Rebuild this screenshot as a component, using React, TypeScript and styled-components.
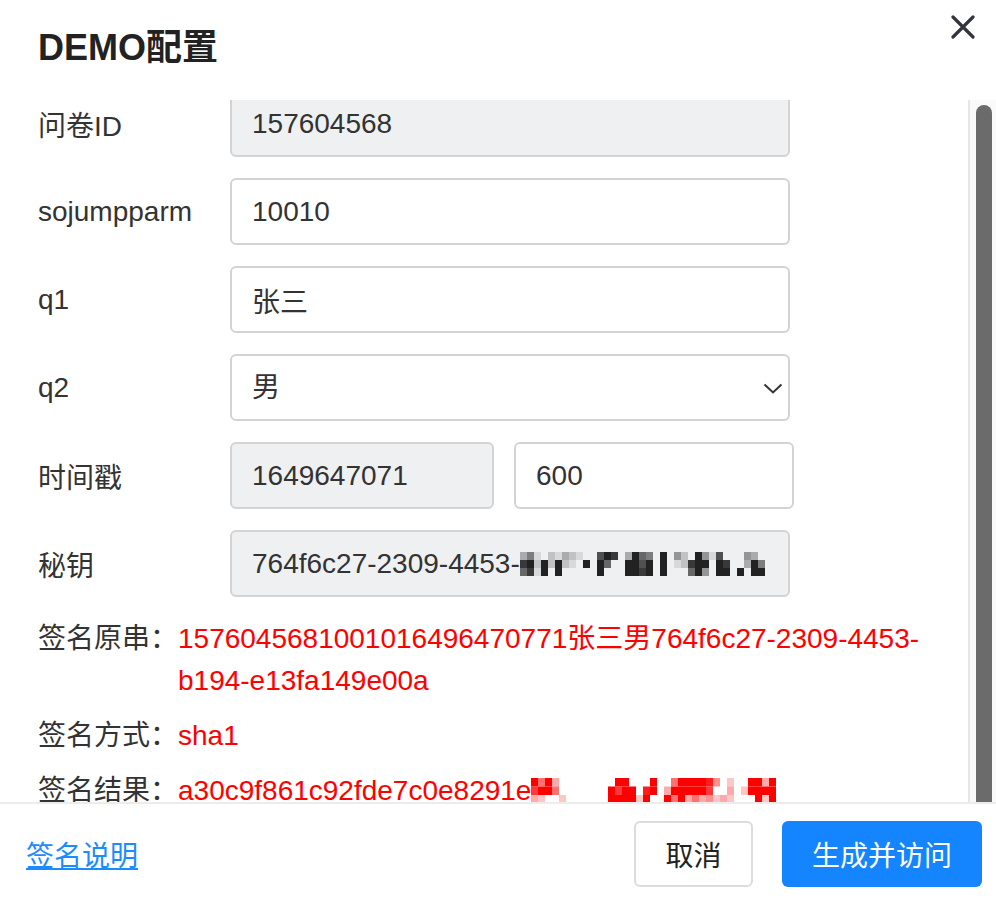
import React, { useEffect, useRef } from "react";
import styled, { createGlobalStyle } from "styled-components";

const GlobalStyle = createGlobalStyle`
  html, body {
    margin: 0;
    padding: 0;
    height: 100%;
  }
  body {
    font-family: "Liberation Sans", "Noto Sans CJK SC", sans-serif;
    color: #333;
    background: #fff;
  }
  #root {
    height: 100%;
  }
`;

const Dialog = styled.div`
  display: flex;
  flex-direction: column;
  height: 100vh;
  overflow: hidden;
  background: #fff;
`;

const Header = styled.header`
  flex-shrink: 0;
  height: 100px;
  display: flex;
  justify-content: space-between;
  align-items: flex-start;
  padding: 0 20px 0 38px;
  box-sizing: border-box;
`;

const Title = styled.h2`
  margin: 30px 0 0;
  font-size: 36px;
  line-height: 36px;
  font-weight: 700;
  color: #222;
`;

const CloseButton = styled.button`
  margin-top: 14px;
  width: 26px;
  height: 26px;
  padding: 0;
  border: none;
  background: transparent;
  cursor: pointer;
  display: flex;
  align-items: center;
  justify-content: center;
`;

const BodyFrame = styled.div`
  flex: 1;
  min-height: 0;
  display: flex;
`;

const Body = styled.div`
  flex: 1;
  min-width: 0;
  overflow-y: scroll;
  padding: 0 38px 8px;
  scrollbar-width: none;

  &::-webkit-scrollbar {
    display: none;
  }
`;

const ScrollTrack = styled.div`
  flex-shrink: 0;
  width: 26px;
  display: flex;
  background: #fafafa;
  border-left: 2px solid #e6e6e6;
  padding: 5px 4px 0 6px;
  box-sizing: content-box;
  width: 16px;
`;

const ScrollThumb = styled.div`
  flex: 1;
  background: #6b6b6b;
  border-radius: 8px 8px 0 0;
`;

const FormRow = styled.div`
  display: grid;
  grid-template-columns: 192px auto;
  align-items: center;
  height: 67px;
  margin-bottom: 21px;
`;

const Label = styled.label`
  font-size: 28px;
  color: #333;
  white-space: nowrap;
`;

const Input = styled.input<{ $muted?: boolean; $width?: number }>`
  box-sizing: border-box;
  width: ${(p) => p.$width ?? 560}px;
  height: 67px;
  padding: 0 20px;
  border: 2px solid #d3d3d3;
  border-radius: 6px;
  background: ${(p) => (p.$muted ? "#eff0f2" : "#fff")};
  font-family: inherit;
  font-size: 28px;
  color: #333;
  outline: none;
`;

const SelectWrap = styled.div`
  position: relative;
  width: 560px;
`;

const Select = styled.select`
  box-sizing: border-box;
  width: 100%;
  height: 67px;
  padding: 0 20px;
  border: 2px solid #d3d3d3;
  border-radius: 6px;
  background: #fff;
  font-family: inherit;
  font-size: 28px;
  color: #333;
  appearance: none;
  outline: none;
`;

const Chevron = styled.svg`
  position: absolute;
  right: 7px;
  top: 29px;
  pointer-events: none;
`;

const Pair = styled.div`
  display: flex;
  gap: 20px;
`;

const StaticField = styled.div`
  box-sizing: border-box;
  width: 560px;
  height: 67px;
  padding: 0 20px;
  border: 2px solid #d3d3d3;
  border-radius: 6px;
  background: #eff0f2;
  font-size: 28px;
  color: #333;
  display: flex;
  align-items: center;
  white-space: nowrap;
  overflow: hidden;
`;

const InfoRow = styled.div`
  display: flex;
  font-size: 28px;
  line-height: 42px;
  margin-bottom: 13px;
`;

const InfoLabel = styled.span`
  flex-shrink: 0;
  width: 140px;
  color: #333;
  white-space: nowrap;
`;

const InfoValue = styled.span`
  flex: 1;
  min-width: 0;
  color: #ff0000;
`;

const MosaicSvg = styled.svg`
  display: inline-block;
  vertical-align: -3px;
  flex-shrink: 0;
`;

const Footer = styled.footer`
  flex-shrink: 0;
  height: 102px;
  box-sizing: border-box;
  border-top: 2px solid #ececec;
  display: flex;
  align-items: center;
  gap: 29px;
  padding: 0 14px 0 26px;
`;

const HelpLink = styled.a`
  margin-right: auto;
  font-size: 28px;
  color: #1a8cff;
  text-decoration: underline;
  cursor: pointer;
`;

const Button = styled.button<{ $primary?: boolean }>`
  height: 66px;
  width: ${(p) => (p.$primary ? 200 : 119)}px;
  box-sizing: border-box;
  border-radius: 6px;
  border: ${(p) => (p.$primary ? "none" : "2px solid #dcdcdc")};
  background: ${(p) => (p.$primary ? "#1485ff" : "#fff")};
  color: ${(p) => (p.$primary ? "#fff" : "#222")};
  font-family: inherit;
  font-size: 28px;
  cursor: pointer;
`;

type MosaicProps = { rows: string[]; color: string; cell: number; rowHeight: number };

function Mosaic({ rows, color, cell, rowHeight }: MosaicProps) {
  const cols = rows[0].length;
  return (
    <MosaicSvg width={cols * cell} height={rows.length * rowHeight}>
      {rows.map((row, r) =>
        row.split("").map((d, c) =>
          d === "0" ? null : (
            <rect
              key={`${r}-${c}`}
              x={c * cell}
              y={r * rowHeight}
              width={cell}
              height={rowHeight}
              fill={color}
              fillOpacity={Number(d) / 9}
            />
          )
        )
      )}
    </MosaicSvg>
  );
}

const SECRET_BLUR = [
  "35102132100798039650904209417000430",
  "89292921090960099790901289909800395",
  "68190900000900099890900069409909099",
];

const RESULT_BLUR = [
  "95930000000099000900599998402009939",
  "79950000000979908903999997003029999",
  "32002000000999929009593534232000929",
];

export default function App() {
  const bodyRef = useRef<HTMLDivElement>(null);

  useEffect(() => {
    if (bodyRef.current) bodyRef.current.scrollTop = 10;
  }, []);

  return (
    <>
      <GlobalStyle />
      <Dialog>
        <Header>
          <Title>DEMO配置</Title>
          <CloseButton aria-label="close">
            <svg width="24" height="24" viewBox="0 0 24 24">
              <path d="M2 2 L22 22 M22 2 L2 22" stroke="#34343e" strokeWidth="3.2" strokeLinecap="round" />
            </svg>
          </CloseButton>
        </Header>

        <BodyFrame>
          <Body ref={bodyRef}>
            <FormRow>
              <Label>问卷ID</Label>
              <Input $muted readOnly defaultValue="157604568" />
            </FormRow>
            <FormRow>
              <Label>sojumpparm</Label>
              <Input defaultValue="10010" />
            </FormRow>
            <FormRow>
              <Label>q1</Label>
              <Input defaultValue="张三" />
            </FormRow>
            <FormRow>
              <Label>q2</Label>
              <SelectWrap>
                <Select defaultValue="男">
                  <option value="男">男</option>
                  <option value="女">女</option>
                </Select>
                <Chevron width="20" height="11" viewBox="0 0 20 11">
                  <path d="M1.5 1.5 L10 9.5 L18.5 1.5" fill="none" stroke="#333" strokeWidth="2" />
                </Chevron>
              </SelectWrap>
            </FormRow>
            <FormRow>
              <Label>时间戳</Label>
              <Pair>
                <Input $muted $width={264} readOnly defaultValue="1649647071" />
                <Input $width={280} defaultValue="600" />
              </Pair>
            </FormRow>
            <FormRow>
              <Label>秘钥</Label>
              <StaticField>
                <span>764f6c27-2309-4453-</span>
                <Mosaic rows={SECRET_BLUR} color="#222" cell={7} rowHeight={8} />
              </StaticField>
            </FormRow>

            <InfoRow>
              <InfoLabel>签名原串：</InfoLabel>
              <InfoValue>1576045681001016496470771张三男764f6c27-2309-4453-b194-e13fa149e00a</InfoValue>
            </InfoRow>
            <InfoRow>
              <InfoLabel>签名方式：</InfoLabel>
              <InfoValue>sha1</InfoValue>
            </InfoRow>
            <InfoRow>
              <InfoLabel>签名结果：</InfoLabel>
              <InfoValue>
                a30c9f861c92fde7c0e8291e
                <Mosaic rows={RESULT_BLUR} color="#ff0000" cell={7} rowHeight={8.5} />
              </InfoValue>
            </InfoRow>
          </Body>
          <ScrollTrack>
            <ScrollThumb />
          </ScrollTrack>
        </BodyFrame>

        <Footer>
          <HelpLink>签名说明</HelpLink>
          <Button>取消</Button>
          <Button $primary>生成并访问</Button>
        </Footer>
      </Dialog>
    </>
  );
}
